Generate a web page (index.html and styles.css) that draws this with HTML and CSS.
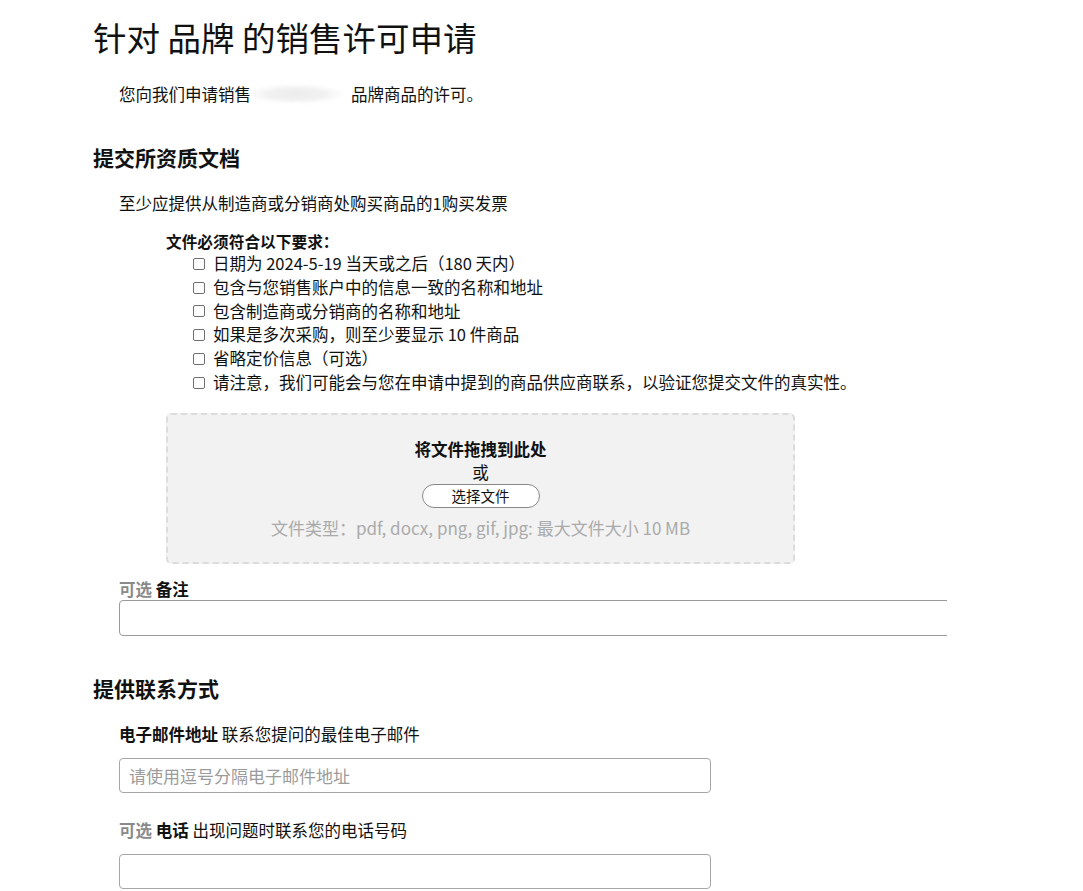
FILE: index.html
```html
<!DOCTYPE html>
<html lang="zh-CN">
<head>
<meta charset="utf-8">
<title>针对 品牌 的销售许可申请</title>
<link rel="stylesheet" href="styles.css">
</head>
<body>
<main class="page">
  <h1 class="title">针对 品牌 的销售许可申请</h1>
  <p class="intro">您向我们申请销售<span class="redacted"></span>品牌商品的许可。</p>

  <h2 class="section-title">提交所资质文档</h2>
  <p class="section-desc">至少应提供从制造商或分销商处购买商品的1购买发票</p>

  <div class="requirements">
    <div class="req-title">文件必须符合以下要求：</div>
    <ul class="req-list">
      <li><input type="checkbox" class="req-check">日期为 2024-5-19 当天或之后（180 天内）</li>
      <li><input type="checkbox" class="req-check">包含与您销售账户中的信息一致的名称和地址</li>
      <li><input type="checkbox" class="req-check">包含制造商或分销商的名称和地址</li>
      <li><input type="checkbox" class="req-check">如果是多次采购，则至少要显示 10 件商品</li>
      <li><input type="checkbox" class="req-check">省略定价信息（可选）</li>
      <li><input type="checkbox" class="req-check">请注意，我们可能会与您在申请中提到的商品供应商联系，以验证您提交文件的真实性。</li>
    </ul>

    <div class="dropzone">
      <div class="drop-title">将文件拖拽到此处</div>
      <div class="drop-or">或</div>
      <button class="drop-button" type="button">选择文件</button>
      <div class="drop-types">文件类型：pdf, docx, png, gif, jpg: 最大文件大小 10 MB</div>
    </div>
  </div>

  <div class="field note-field">
    <label class="field-label tight"><span class="optional">可选</span> <b>备注</b></label>
    <div class="note-clip"><textarea class="note-input"></textarea></div>
  </div>

  <h2 class="section-title contact-title">提供联系方式</h2>

  <div class="field">
    <label class="field-label"><b>电子邮件地址</b> 联系您提问的最佳电子邮件</label>
    <input class="text-input" type="text" placeholder="请使用逗号分隔电子邮件地址">
  </div>

  <div class="field phone-field">
    <label class="field-label"><span class="optional">可选</span> <b>电话</b> 出现问题时联系您的电话号码</label>
    <input class="text-input" type="text">
  </div>
</main>
</body>
</html>
```

FILE: styles.css
```css
* { box-sizing: border-box; }

html, body {
  margin: 0;
  padding: 0;
  background: #ffffff;
}

body {
  font-family: "Noto Sans CJK SC", "Noto Sans", "Liberation Sans", sans-serif;
  color: #0f1111;
  font-size: 16.5px;
  overflow: hidden;
}

.page {
  padding-left: 93px;
  padding-top: 16px;
}

.title {
  margin: 0;
  font-size: 33.5px;
  line-height: 42px;
  font-weight: 400;
  color: #111;
}

.intro {
  margin: 24px 0 0 26px;
  font-size: 16.5px;
  line-height: 24px;
  display: flex;
  align-items: center;
}

.redacted {
  display: inline-block;
  width: 100px;
  height: 24px;
  background:
    radial-gradient(ellipse 50px 10px at 45% 50%, #ececec 0%, #f1f1f1 55%, rgba(255,255,255,0) 100%);
  filter: blur(1px);
}

.section-title {
  margin: 37px 0 0 0;
  font-size: 21px;
  line-height: 28px;
  font-weight: 700;
  color: #111;
}

.section-desc {
  margin: 20px 0 0 26px;
  font-size: 16.5px;
  line-height: 24px;
}

.requirements {
  margin-left: 73px;
}

.req-title {
  margin-top: 17px;
  font-size: 15.7px;
  line-height: 20px;
  height: 20px;
  font-weight: 700;
}

.req-list {
  list-style: none;
  margin: 0;
  padding: 0 0 0 27px;
}

.req-list li {
  font-size: 16.5px;
  line-height: 23.8px;
  height: 23.8px;
  display: flex;
  align-items: center;
  white-space: nowrap;
}

.req-check {
  appearance: none;
  -webkit-appearance: none;
  width: 12px;
  height: 12px;
  margin: 0 8px 0 0;
  border: 1px solid #6f6f6f;
  border-radius: 2px;
  background: #fff;
  flex: none;
}

.dropzone {
  margin-top: 18px;
  width: 629px;
  height: 151px;
  background: #f2f2f2;
  border: 2px dashed #dcdcdc;
  border-radius: 5px;
  display: flex;
  flex-direction: column;
  align-items: center;
  padding-top: 22px;
}

.drop-title {
  font-size: 16.5px;
  line-height: 24px;
  font-weight: 700;
}

.drop-or {
  font-size: 16.5px;
  line-height: 22px;
}

.drop-button {
  margin-top: 1px;
  width: 118px;
  height: 24px;
  border: 1px solid #888;
  border-radius: 12px;
  background: #fff;
  font-family: inherit;
  font-size: 14.5px;
  line-height: 20px;
  color: #111;
  padding: 0;
}

.drop-types {
  margin-top: 8px;
  font-size: 17px;
  line-height: 24px;
  color: #aaaaaa;
}

.field {
  margin-left: 26px;
}

.note-field {
  margin-top: 14px;
}

.field-label {
  display: block;
  font-size: 16.5px;
  line-height: 24px;
  color: #111;
}

.field-label.tight {
  line-height: 22px;
}

.field-label b {
  font-weight: 700;
}

.optional {
  color: #8a8a8a;
  font-weight: 700;
}

.note-clip {
  width: 828px;
  overflow: hidden;
}

.note-input {
  display: block;
  width: 900px;
  height: 36px;
  border: 1px solid #9a9a9a;
  border-radius: 4px;
  resize: none;
  background: #fff;
  margin: 0;
  font-family: inherit;
}

.contact-title {
  margin-top: 38px;
}

.contact-title + .field {
  margin-top: 20px;
}

.text-input {
  display: block;
  margin-top: 12px;
  width: 592px;
  height: 35px;
  border: 1px solid #a6a6a6;
  border-radius: 4px;
  padding: 0 9px;
  font-family: inherit;
  font-size: 17px;
  color: #111;
  background: #fff;
}

.text-input::placeholder {
  color: #9b9b9b;
}

.phone-field {
  margin-top: 25px;
}
```
